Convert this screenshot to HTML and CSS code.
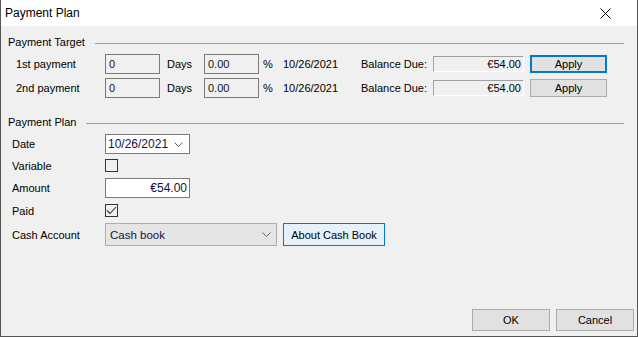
FILE: index.html
```html
<!DOCTYPE html>
<html lang="en">
<head>
    <meta charset="UTF-8">
    <title>Payment Plan</title>
    <link rel="stylesheet" href="styles.css">
</head>
<body>
    <div class="window">
        <!-- Barre de titre -->
        <div class="titlebar">
            <span class="title">Payment Plan</span>
            <svg class="close" width="11" height="11" viewBox="0 0 11 11">
                <path d="M0.5 0.5 L10.5 10.5 M10.5 0.5 L0.5 10.5" stroke="#000" stroke-width="1" fill="none"/>
            </svg>
        </div>

        <div class="content">
            <!-- Payment Target -->
            <div class="group-head">
                <span>Payment Target</span>
                <span class="rule"></span>
            </div>

            <div class="target-row first">
                <span class="lbl">1st payment</span>
                <span class="field">0</span>
                <span class="unit">Days</span>
                <span class="field">0.00</span>
                <span class="pct">%</span>
                <span class="date">10/26/2021</span>
                <span class="due">Balance Due:</span>
                <span class="balance">€54.00</span>
                <span class="btn apply focus">Apply</span>
            </div>

            <div class="target-row">
                <span class="lbl">2nd payment</span>
                <span class="field">0</span>
                <span class="unit">Days</span>
                <span class="field">0.00</span>
                <span class="pct">%</span>
                <span class="date">10/26/2021</span>
                <span class="due">Balance Due:</span>
                <span class="balance">€54.00</span>
                <span class="btn apply">Apply</span>
            </div>

            <!-- Payment Plan -->
            <div class="group-head second">
                <span>Payment Plan</span>
                <span class="rule"></span>
            </div>

            <div class="plan-row row-date">
                <span class="plan-lbl">Date</span>
                <span class="picker">
                    <span>10/26/2021</span>
                    <svg width="9" height="5" viewBox="0 0 9 5"><polyline points="0.5,0.5 4.5,4.5 8.5,0.5" stroke="#606060" fill="none"/></svg>
                </span>
            </div>

            <div class="plan-row row-check">
                <span class="plan-lbl">Variable</span>
                <span class="check"></span>
            </div>

            <div class="plan-row row-amount">
                <span class="plan-lbl">Amount</span>
                <span class="amount">€54.00</span>
            </div>

            <div class="plan-row row-check">
                <span class="plan-lbl">Paid</span>
                <span class="check">
                    <svg width="11" height="11" viewBox="0 0 11 11"><polyline points="1,5.5 4,8.5 10,2" stroke="#333" stroke-width="1.1" fill="none"/></svg>
                </span>
            </div>

            <div class="plan-row row-cash">
                <span class="plan-lbl">Cash Account</span>
                <span class="combo">
                    <span>Cash book</span>
                    <svg width="9" height="5" viewBox="0 0 9 5"><polyline points="0.5,0.5 4.5,4.5 8.5,0.5" stroke="#606060" fill="none"/></svg>
                </span>
                <span class="btn about">About Cash Book</span>
            </div>
        </div>

        <!-- Boutons -->
        <div class="footer">
            <span class="btn action">OK</span>
            <span class="btn action">Cancel</span>
        </div>
    </div>
</body>
</html>
```
FILE: styles.css
```css
/* Fenêtre de dialogue */
body {
    margin: 0;
    padding: 0;
    background: #f0f0f0;
    font-family: 'Liberation Sans', Arial, sans-serif;
    font-size: 11px;
    color: #000000;
}

.window {
    width: 638px;
    height: 337px;
    box-sizing: border-box;
    border: 1px solid #555555;
    border-top: none;
    background: #f0f0f0;
    display: flex;
    flex-direction: column;
}

/* Barre de titre */
.titlebar {
    height: 26px;
    background: #ffffff;
    display: flex;
    align-items: center;
    justify-content: space-between;
    padding: 0 26px 0 4px;
}

.title {
    font-size: 12px;
}

.close {
    display: block;
}

/* Contenu */
.content {
    flex: 1;
    padding: 0 13px 0 7px;
}

.group-head {
    display: flex;
    align-items: center;
    height: 16px;
    margin-top: 8px;
}

.group-head.second {
    margin-top: 16px;
}

.rule {
    flex: 1;
    border-top: 1px solid #a0a0a0;
    margin-left: 10px;
    margin-top: 2px;
}

.group-head.second .rule {
    margin-top: 3px;
}

/* Lignes Payment Target */
.target-row {
    display: flex;
    align-items: center;
    height: 20px;
    margin-top: 4px;
}

.lbl {
    width: 97px;
    padding-left: 8px;
    box-sizing: border-box;
}

.field {
    width: 55px;
    height: 20px;
    box-sizing: border-box;
    border: 1px solid #7a7a7a;
    padding: 3px 0 0 3px;
    color: #111111;
}

.unit {
    width: 44px;
    padding-left: 7px;
    box-sizing: border-box;
}

.pct {
    width: 24px;
    padding-left: 4px;
    box-sizing: border-box;
}

.date {
    width: 78px;
}

.due {
    width: 72px;
}

.balance {
    width: 91px;
    height: 16px;
    box-sizing: border-box;
    border-top: 1px solid #a0a0a0;
    border-left: 1px solid #a0a0a0;
    border-bottom: 1px solid #ffffff;
    border-right: 1px solid #ffffff;
    text-align: right;
    padding: 1px 2px 0 0;
    line-height: 13px;
}

/* Boutons */
.btn {
    display: flex;
    align-items: center;
    justify-content: center;
    box-sizing: border-box;
    background: #e1e1e1;
    border: 1px solid #adadad;
}

.apply {
    width: 77px;
    height: 18px;
    margin-left: 6px;
}

.apply.focus {
    border: 2px solid #0078d7;
}

/* Lignes Payment Plan */
.plan-row {
    display: flex;
    align-items: center;
}

.plan-lbl {
    width: 97px;
    padding-left: 4px;
    box-sizing: border-box;
}

.row-date {
    height: 20px;
    margin-top: 4px;
}

.row-check {
    height: 13px;
    margin-top: 5px;
}

.row-amount {
    height: 20px;
    margin-top: 6px;
}

.row-check + .row-check,
.row-amount + .row-check {
    margin-top: 6px;
}

.row-cash {
    height: 23px;
    margin-top: 6px;
}

.picker,
.amount {
    width: 85px;
    height: 20px;
    box-sizing: border-box;
    border: 1px solid #7a7a7a;
    background: #ffffff;
    display: flex;
    align-items: center;
}

.picker {
    justify-content: space-between;
    padding: 0 6px 0 2px;
    color: #1b1040;
    font-size: 12px;
}

.amount {
    justify-content: flex-end;
    padding-right: 2px;
    color: #1b1040;
    font-size: 12px;
}

.check {
    width: 13px;
    height: 13px;
    box-sizing: border-box;
    border: 1px solid #333333;
    display: flex;
    align-items: center;
    justify-content: center;
}

.check svg {
    display: block;
}

.combo {
    width: 172px;
    height: 23px;
    box-sizing: border-box;
    border: 1px solid #adadad;
    background: #e5e5e5;
    display: flex;
    align-items: center;
    justify-content: space-between;
    padding: 0 5px 0 4px;
    color: #141434;
    font-size: 11.5px;
}

.about {
    width: 102px;
    height: 23px;
    margin-left: 6px;
    background: #e5f1fb;
    border: 1px solid #0078d7;
}

/* Pied */
.footer {
    display: flex;
    justify-content: flex-end;
    gap: 6px;
    padding: 0 3px 5px 0;
}

.action {
    width: 78px;
    height: 22px;
}
```
